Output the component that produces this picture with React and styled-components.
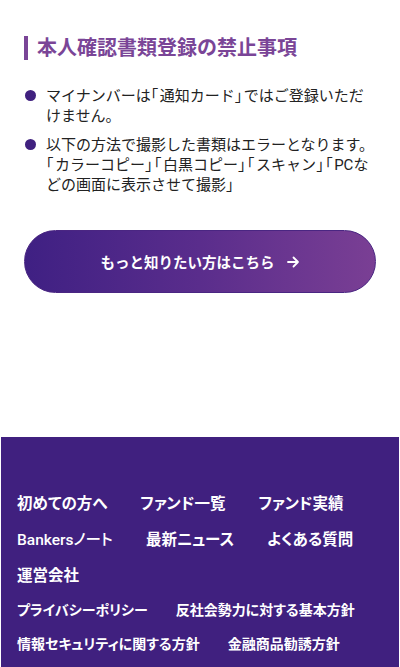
import styled, { createGlobalStyle } from "styled-components";

const GlobalStyle = createGlobalStyle`
  html, body {
    margin: 0;
    padding: 0;
    background: #fff;
  }
  body {
    font-family: "Roboto", "Noto Sans CJK JP", sans-serif;
    color: #222;
    -webkit-font-smoothing: antialiased;
  }
`;

const Page = styled.div`
  width: 400px;
  overflow: hidden;
`;

const Section = styled.section`
  padding: 0 24px;
`;

// top heading is scrolled mostly out of view in the screenshot
const ClippedTitle = styled.h2`
  margin: -25px 0 0;
  font-size: 22px;
  line-height: 28px;
  font-weight: 700;
  color: #6f3c96;
`;

const SubTitle = styled.h3`
  margin: 33px 0 0;
  padding-left: 9px;
  border-left: 4px solid #7a4597;
  font-size: 20px;
  line-height: 24px;
  font-weight: 700;
  color: #7a4597;
`;

const List = styled.ul`
  list-style: none;
  margin: 26px 0 0;
  padding: 0;
  display: flex;
  flex-direction: column;
  gap: 9px;
`;

const Item = styled.li`
  display: flex;
  align-items: flex-start;
  gap: 10px;
  font-size: 15px;
  line-height: 20px;
`;

const Dot = styled.span`
  flex: none;
  width: 11px;
  height: 11px;
  margin: 4px 0 0 1px;
  border-radius: 50%;
  background: #40217f;
`;

const ItemText = styled.span`
  flex: 1;
`;

// narrower corner brackets
const Punct = styled.span`
  font-feature-settings: "halt";
  letter-spacing: 1.5px;
`;

const MoreButton = styled.a`
  display: flex;
  align-items: center;
  justify-content: center;
  gap: 11px;
  height: 63px;
  margin-top: 35px;
  border-radius: 32px;
  border: 1px solid #4a2682;
  background: linear-gradient(90deg, #3f2083 0%, #5a2d8c 50%, #7a3f94 100%);
  color: #fff;
  font-size: 14.5px;
  font-weight: 700;
  text-decoration: none;
  box-sizing: border-box;
`;

const Footer = styled.footer`
  margin: 144px 1px 0;
  padding: 56px 16px 14px;
  background: #40207f;
`;

const LinkRow = styled.div`
  display: flex;
  flex-wrap: wrap;
  column-gap: ${({ $small }) => ($small ? "28px" : "33px")};
  row-gap: 14px;
  margin-top: ${({ $small }) => ($small ? "13px" : "0")};
`;

const FooterLink = styled.a`
  color: #fff;
  text-decoration: none;
  font-weight: ${({ $light }) => ($light ? 500 : 700)};
  font-size: ${({ $small }) => ($small ? "14px" : "15.5px")};
  line-height: ${({ $small }) => ($small ? "20px" : "22px")};
  font-feature-settings: "palt";
`;

const Arrow = () => (
  <svg width="14" height="14" viewBox="0 0 14 14" fill="none">
    <path
      d="M2 7h10M7.5 2.5L12 7l-4.5 4.5"
      stroke="#fff"
      strokeWidth="1.8"
      strokeLinecap="round"
      strokeLinejoin="round"
    />
  </svg>
);

const trimBrackets = (text) =>
  text
    .split(/([「」])/)
    .map((part, i) =>
      part === "「" || part === "」" ? <Punct key={i}>{part}</Punct> : part
    );

const mainLinks = [
  "初めての方へ",
  "ファンド一覧",
  "ファンド実績",
  "Bankersノート",
  "最新ニュース",
  "よくある質問",
  "運営会社",
];

const subLinks = [
  "プライバシーポリシー",
  "反社会勢力に対する基本方針",
  "情報セキュリティに関する方針",
  "金融商品勧誘方針",
];

const App = () => {
  return (
    <>
      <GlobalStyle />
      <Page>
        <Section>
          <ClippedTitle>注意事項</ClippedTitle>
          <SubTitle>本人確認書類登録の禁止事項</SubTitle>
          <List>
            <Item>
              <Dot />
              <ItemText>
                {trimBrackets(
                  "マイナンバーは「通知カード」ではご登録いただけません。"
                )}
              </ItemText>
            </Item>
            <Item>
              <Dot />
              <ItemText>
                以下の方法で撮影した書類はエラーとなります。
                <br />
                {trimBrackets(
                  "「カラーコピー」「白黒コピー」「スキャン」「PCなどの画面に表示させて撮影」"
                )}
              </ItemText>
            </Item>
          </List>
          <MoreButton href="#">
            もっと知りたい方はこちら
            <Arrow />
          </MoreButton>
        </Section>
        <Footer>
          <LinkRow>
            {mainLinks.map((l) => (
              <FooterLink key={l} href="#" $light={l.startsWith("Bankers")}>
                {l}
              </FooterLink>
            ))}
          </LinkRow>
          <LinkRow $small>
            {subLinks.map((l) => (
              <FooterLink key={l} href="#" $small>
                {l}
              </FooterLink>
            ))}
          </LinkRow>
        </Footer>
      </Page>
    </>
  );
};

export default App;
